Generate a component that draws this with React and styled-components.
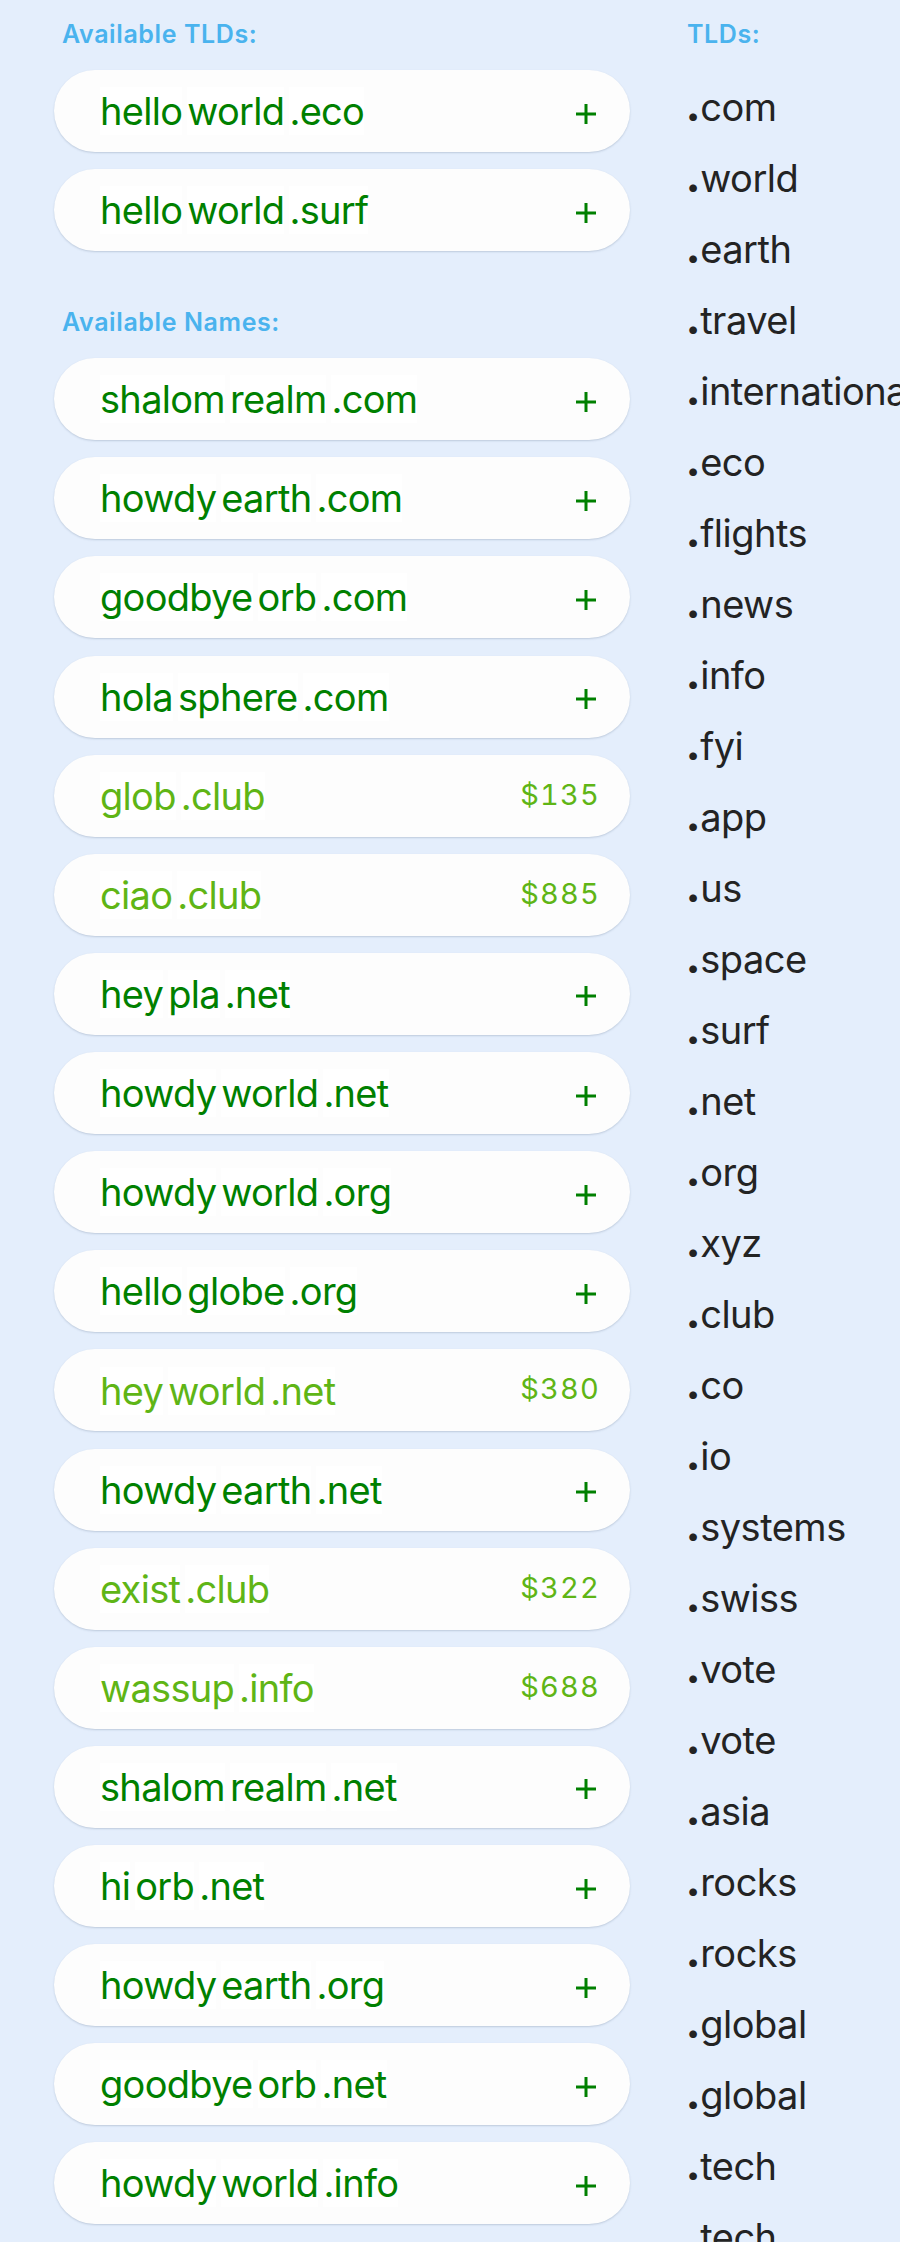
import React from "react";
import styled, { createGlobalStyle } from "styled-components";

const GlobalStyle = createGlobalStyle`
  html, body {
    margin: 0;
    padding: 0;
    background: #e4eefc;
    overflow-x: hidden;
  }
  body {
    font-family: Inter, "Noto Sans", "Liberation Sans", sans-serif;
  }
`;

const Page = styled.div`
  display: flex;
  align-items: flex-start;
  padding: 20px 0 0 54px;
  white-space: nowrap;
`;

const LeftColumn = styled.div`
  width: 576px;
  flex-shrink: 0;
  display: flex;
  flex-direction: column;
`;

const Section = styled.section`
  display: flex;
  flex-direction: column;
  margin-bottom: 57px;
`;

const SectionTitle = styled.div`
  font-size: 25px;
  line-height: 28px;
  font-weight: 600;
  letter-spacing: 0.6px;
  color: #4ab3ee;
  margin: 0 0 22px ${(p) => p.$indent || 0}px;
`;

const CardList = styled.div`
  display: flex;
  flex-direction: column;
  gap: 17.13px;
`;

const Card = styled.div`
  height: 82px;
  box-sizing: border-box;
  border-radius: 41px;
  background: #fdfdfd;
  box-shadow: 0 1px 2px rgba(90, 110, 140, 0.28);
  display: flex;
  align-items: center;
  justify-content: space-between;
  padding: 0 31px 0 46px;
`;

const Name = styled.div`
  display: flex;
  align-items: center;
  color: ${(p) => (p.$premium ? "#5fb516" : "#008000")};
  font-size: 38px;
  line-height: 48px;
  letter-spacing: -0.7px;
  margin-top: ${(p) => (p.$premium ? "1px" : "0")};
`;

const Part = styled.span`
  background: #ffffff;
  margin-right: 5px;
  &:last-child {
    margin-right: 0;
  }
`;

const Price = styled.span`
  color: #5fb516;
  font-size: 29px;
  line-height: 34px;
  font-variant-numeric: tabular-nums;
  letter-spacing: 1.2px;
  margin-right: -1px;
  margin-top: -2px;
`;

const PlusIcon = styled.svg`
  width: 20px;
  height: 20px;
  margin-top: 5px;
  margin-right: 3px;
  flex-shrink: 0;
`;

const RightColumn = styled.div`
  margin-left: 57px;
  display: flex;
  flex-direction: column;
`;

const TldList = styled.ul`
  list-style: none;
  margin: 2.4px 0 0 0;
  padding: 0;
`;

const TldItem = styled.li`
  font-size: 38px;
  line-height: 71px;
  letter-spacing: -0.5px;
  color: #232323;
`;

const Dot = styled.span`
  font-weight: 900;
  letter-spacing: 0;
  margin-left: -1px;
`;

const Plus = () => (
  <PlusIcon viewBox="0 0 20 20">
    <path d="M10 0v20M0 10h20" stroke="#008000" strokeWidth="3" fill="none" />
  </PlusIcon>
);

const tldCards = [
  { parts: ["hello", "world", ".eco"] },
  { parts: ["hello", "world", ".surf"] },
];

const nameCards = [
  { parts: ["shalom", "realm", ".com"] },
  { parts: ["howdy", "earth", ".com"] },
  { parts: ["goodbye", "orb", ".com"] },
  { parts: ["hola", "sphere", ".com"] },
  { parts: ["glob", ".club"], price: "$135" },
  { parts: ["ciao", ".club"], price: "$885" },
  { parts: ["hey", "pla", ".net"] },
  { parts: ["howdy", "world", ".net"] },
  { parts: ["howdy", "world", ".org"] },
  { parts: ["hello", "globe", ".org"] },
  { parts: ["hey", "world", ".net"], price: "$380" },
  { parts: ["howdy", "earth", ".net"] },
  { parts: ["exist", ".club"], price: "$322" },
  { parts: ["wassup", ".info"], price: "$688" },
  { parts: ["shalom", "realm", ".net"] },
  { parts: ["hi", "orb", ".net"] },
  { parts: ["howdy", "earth", ".org"] },
  { parts: ["goodbye", "orb", ".net"] },
  { parts: ["howdy", "world", ".info"] },
];

const tlds = [
  "com", "world", "earth", "travel", "international", "eco", "flights",
  "news", "info", "fyi", "app", "us", "space", "surf", "net", "org", "xyz",
  "club", "co", "io", "systems", "swiss", "vote", "vote", "asia", "rocks",
  "rocks", "global", "global", "tech", "tech",
];

const DomainCard = ({ parts, price }) => (
  <Card>
    <Name $premium={!!price}>
      {parts.map((p, i) => (
        <Part key={i}>{p}</Part>
      ))}
    </Name>
    {price ? <Price>{price}</Price> : <Plus />}
  </Card>
);

export default function App() {
  return (
    <>
      <GlobalStyle />
      <Page>
        <LeftColumn>
          <Section>
            <SectionTitle $indent={8}>Available TLDs:</SectionTitle>
            <CardList>
              {tldCards.map((c, i) => (
                <DomainCard key={i} {...c} />
              ))}
            </CardList>
          </Section>
          <Section>
            <SectionTitle $indent={8}>Available Names:</SectionTitle>
            <CardList>
              {nameCards.map((c, i) => (
                <DomainCard key={i} {...c} />
              ))}
            </CardList>
          </Section>
        </LeftColumn>
        <RightColumn>
          <SectionTitle>TLDs:</SectionTitle>
          <TldList>
            {tlds.map((t, i) => (
              <TldItem key={i}>
                <Dot>.</Dot>
                {t}
              </TldItem>
            ))}
          </TldList>
        </RightColumn>
      </Page>
    </>
  );
}
